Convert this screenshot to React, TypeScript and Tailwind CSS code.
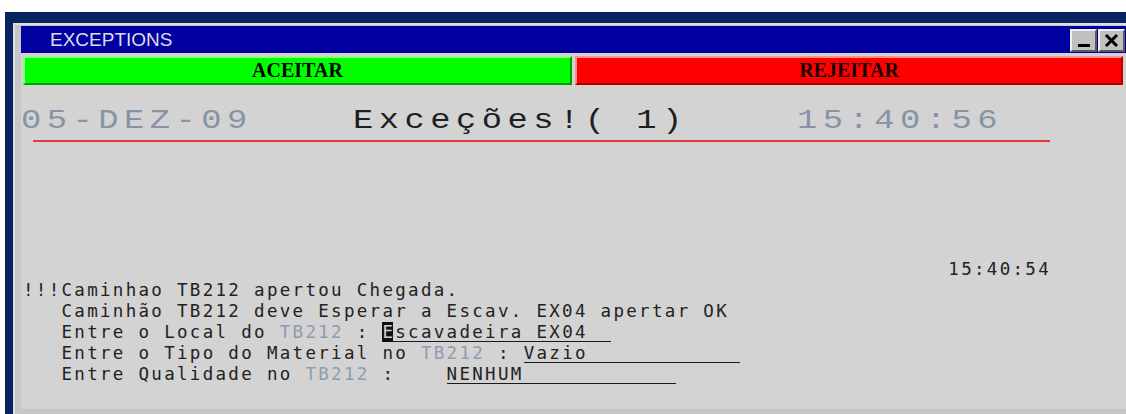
import React from 'react';

// 终端窗口里的异常提示面板
const mono = "font-['DejaVu_Sans_Mono',monospace] text-[17.5px] tracking-[2.3px] leading-[21px] whitespace-pre";
const wide = "inline-block origin-left scale-x-125 font-['Liberation_Mono',monospace] text-[27px] tracking-[4.4px] leading-[30px] whitespace-pre";

function TruckId() {
  return <span className="text-[#8d9db0]">TB212</span>;
}

function Field({ width, children }: { width: string; children: React.ReactNode }) {
  return (
    <span className={`inline-block leading-[18px] border-b border-[#1a1a1a] ${width}`}>{children}</span>
  );
}

function TitleButton({ children }: { children: React.ReactNode }) {
  return (
    <div className="w-[27px] h-[23px] bg-[#c0c0c0] border-t-2 border-l-2 border-[#f0f0f0] border-b-2 border-r-2 border-b-[#5a5a5a] border-r-[#5a5a5a] flex items-center justify-center">
      {children}
    </div>
  );
}

export default function App() {
  return (
    <div className="w-[1126px] h-[414px] bg-white overflow-hidden pt-[12px]">
      <div className="ml-[5px] w-[1121px] h-[402px] bg-[#0a2461] pl-[8px] pt-[11px] flex flex-col">
        <div className="flex-1 flex flex-col border-l-2 border-t-2 border-[#dedede] bg-[#c6c6c6] pl-[6px] pt-[1px] pb-[5px]">
          <div className="flex-1 bg-[#d3d3d3] flex flex-col">
            {/* 标题栏 */}
            <div className="h-[27px] bg-[#0000a0] flex justify-between">
              <span className="pl-[29px] font-['Liberation_Sans',Arial,sans-serif] text-[19px] leading-[27px] text-[#dcdcec]">
                EXCEPTIONS
              </span>
              <div className="flex gap-[1px] mt-[3px] mr-[1px]">
                <TitleButton>
                  <div className="w-[12px] h-[3px] bg-black mt-[9px]" />
                </TitleButton>
                <TitleButton>
                  <svg width="15" height="15" viewBox="0 0 15 15">
                    <path d="M2 2 L13 13 M13 2 L2 13" stroke="#000" strokeWidth="3" />
                  </svg>
                </TitleButton>
              </div>
            </div>

            {/* 接受 / 拒绝 */}
            <div className="mt-[3px] h-[29px] flex gap-[3px] pl-[2px] pr-[3px] font-['Liberation_Serif','Times_New_Roman',serif] font-bold text-[20px] leading-[25px]">
              <div className="w-[549px] bg-[#00ff00] border-t-2 border-l-2 border-[#8cff8c] border-b-2 border-r-2 border-b-[#00a000] border-r-[#00a000] text-center text-black">
                ACEITAR
              </div>
              <div className="flex-1 bg-[#ff0000] border-t-2 border-l-2 border-[#ff9090] border-b-2 border-r-2 border-b-[#b00000] border-r-[#b00000] text-center text-[#1a0000]">
                REJEITAR
              </div>
            </div>

            {/* 日期 / 标题 / 时间 */}
            <div className="mt-[21px] h-[30px] flex">
              <div className="w-[332px]">
                <span className={`${wide} text-[#8794a5]`}>05-DEZ-09</span>
              </div>
              <div className="w-[444px]">
                <span className={`${wide} text-[#1e1e1e]`}>Exceções!( 1)</span>
              </div>
              <div>
                <span className={`${wide} text-[#8794a5]`}>15:40:56</span>
              </div>
            </div>
            <div className="mt-[4px] ml-[12px] w-[1017px] h-[2px] bg-[#e03a3a]" />

            {/* 消息区 */}
            <div className={`mt-[117px] pl-[2px] text-[#222] ${mono}`}>
              <div className="flex justify-end pr-[75px]">15:40:54</div>
              <div>!!!Caminhao TB212 apertou Chegada.</div>
              <div>   Caminhão TB212 deve Esperar a Escav. EX04 apertar OK</div>
              <div>
                {'   Entre o Local do '}
                <TruckId />
                {' : '}
                <Field width="w-[229px]">
                  <span className="bg-[#111] text-[#d3d3d3] tracking-normal mr-[2.3px]">E</span>
                  scavadeira EX04
                </Field>
              </div>
              <div>
                {'   Entre o Tipo do Material no '}
                <TruckId />
                {' : '}
                <Field width="w-[216px]">Vazio</Field>
              </div>
              <div>
                {'   Entre Qualidade no '}
                <TruckId />
                {' :    '}
                <Field width="w-[229px]">NENHUM</Field>
              </div>
            </div>
          </div>
        </div>
      </div>
    </div>
  );
}
